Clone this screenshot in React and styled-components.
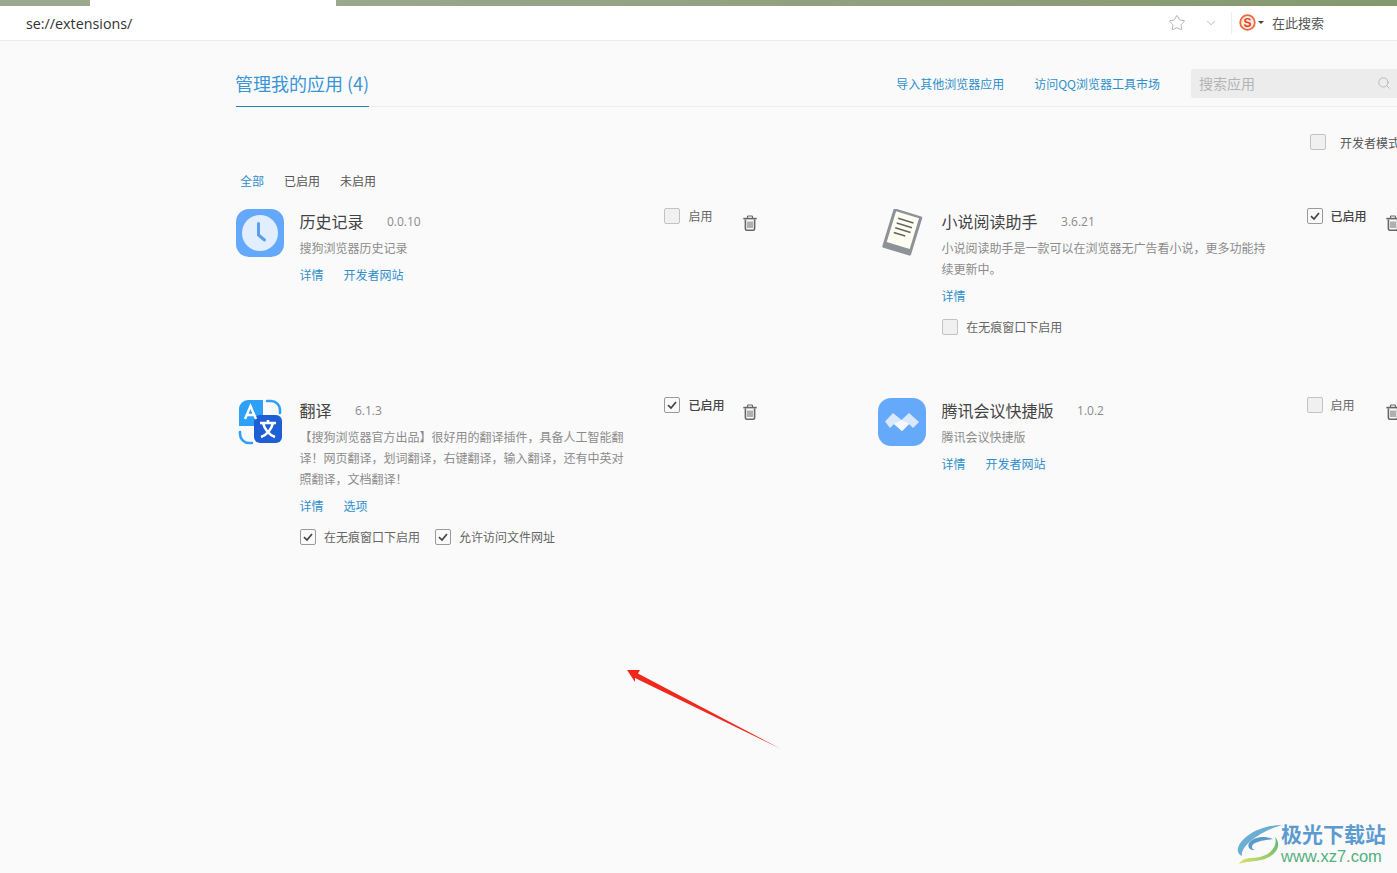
import React from 'react'
import styled, { createGlobalStyle } from 'styled-components'
import { Star, ChevronDown, Search } from 'lucide-react'

const GlobalStyle = createGlobalStyle`
  html, body {
    margin: 0;
    padding: 0;
    background: #fafafa;
  }
  * {
    box-sizing: border-box;
  }
`

const Page = styled.div`
  position: relative;
  width: 1397px;
  height: 873px;
  overflow: hidden;
  background: #fafafa;
  font-family: "Noto Sans CJK SC", "Noto Sans", sans-serif;
  color: #555;
`

const TopStrip = styled.div`
  display: flex;
  height: 6px;
`
const StripPart = styled.div`
  width: ${p => p.$width || 'auto'};
  flex: ${p => (p.$width ? 'none' : '1')};
  background: ${p => p.$bg};
`

const AddressBar = styled.div`
  display: flex;
  align-items: center;
  height: 35px;
  padding: 0 0 1px 26px;
  background: #fff;
  border-bottom: 1px solid #ececec;
`
const Url = styled.div`
  flex: 1;
  padding-top: 2px;
  font-family: "Open Sans", sans-serif;
  font-size: 14.3px;
  color: #333;
`
const BarIcon = styled.span`
  display: flex;
  margin-right: ${p => p.$gap}px;
  color: ${p => p.$color};
`
const BarDivider = styled.span`
  width: 1px;
  height: 22px;
  margin-right: 7px;
  background: #eee;
`
const Caret = styled.span`
  width: 0;
  height: 0;
  margin: 0 8px 0 2px;
  border: 3px solid transparent;
  border-top: 3px solid #444;
  border-bottom: 0;
`
const BarSearch = styled.div`
  width: 125px;
  font-size: 13px;
  color: #555;
`

const Content = styled.div`
  width: 1170px;
  margin-left: 236px;
`

const Header = styled.div`
  display: flex;
  align-items: flex-end;
  height: 66px;
  border-bottom: 1px solid #eee;
`
const Tab = styled.div`
  width: 133px;
  height: 34px;
  margin-bottom: -1px;
  border-bottom: 1px solid #2a82b8;
  font-size: 18px;
  line-height: 21px;
  text-indent: -1px;
  color: #3a95d8;
  white-space: nowrap;
`
const HeaderLinks = styled.div`
  flex: 1;
  display: flex;
  justify-content: flex-end;
  gap: 30px;
  align-self: center;
  margin: 20px 31px 0 0;
`
const HeaderLink = styled.a`
  font-size: 12px;
  color: #2f8fcc;
`
const SearchBox = styled.div`
  display: flex;
  align-items: center;
  justify-content: space-between;
  width: 215px;
  height: 29px;
  margin-bottom: 8px;
  padding: 0 15px 2px 8px;
  border-radius: 2px;
  background: #ececec;
  font-size: 14px;
  color: #b4b4b4;
`

const DevRow = styled.div`
  display: flex;
  justify-content: flex-end;
  align-items: center;
  gap: 14px;
  margin-top: 27px;
  padding-right: 6px;
  height: 16px;
  font-size: 12px;
  color: #555;
`

const Filters = styled.div`
  display: flex;
  gap: 20px;
  margin-top: 22px;
  padding-left: 4px;
  height: 18px;
  font-size: 12px;
  line-height: 18px;
  color: #555;
`
const Filter = styled.span`
  color: ${p => (p.$active ? '#2f8fcc' : '#555')};
`

const Grid = styled.div`
  display: grid;
  grid-template-columns: 642.2px 642px;
  grid-auto-rows: 189px;
  margin-top: 19px;
`
const Card = styled.div`
  display: flex;
  align-items: flex-start;
`
const IconBox = styled.div`
  flex: none;
  width: 48px;
  height: 48px;
`
const Body = styled.div`
  width: 332px;
  margin-left: 15.4px;
  padding-right: 6px;
`
const TitleRow = styled.div`
  display: flex;
  align-items: center;
  gap: 23.5px;
  height: 24px;
`
const Title = styled.div`
  font-size: 16px;
  color: #444;
`
const Version = styled.span`
  font-family: "Open Sans", sans-serif;
  font-size: 12px;
  color: #8a8a8a;
`
const Desc = styled.div`
  margin-top: 4px;
  font-size: 12px;
  line-height: 21px;
  color: #8c8c8c;
`
const Links = styled.div`
  display: flex;
  gap: 20px;
  margin-top: 6px;
  height: 21px;
  font-size: 12px;
  line-height: 21px;
`
const LinkText = styled.a`
  color: #2f8fcc;
`
const Options = styled.div`
  display: flex;
  gap: 15px;
  margin: 13px 0 0 0.6px;
`
const Controls = styled.div`
  flex: none;
  display: flex;
  align-items: flex-start;
  width: 102px;
  margin-top: -1px;
  margin-left: 33px;
`
const EnableLabel = styled.span`
  width: 55px;
  font-size: 12px;
  line-height: 16px;
  color: ${p => (p.$on ? '#444' : '#666')};
  font-weight: ${p => (p.$on ? 500 : 400)};
`
const CheckRow = styled.label`
  display: flex;
  align-items: center;
  gap: 8px;
  font-size: 12px;
  line-height: 16px;
  color: #666;
`
const Box = styled.span`
  flex: none;
  display: flex;
  align-items: center;
  justify-content: center;
  width: 16px;
  height: 16px;
  border: 1px solid ${p => (p.$checked ? '#9a9a9a' : '#c2c2c2')};
  border-radius: 2px;
  background: ${p => (p.$checked ? '#fafafa' : '#f0f0f0')};
`
const TrashWrap = styled.span`
  display: flex;
  margin-top: 7px;
`
const EnableCheck = styled(Box)`
  margin-right: 8px;
`

const Arrow = styled.svg`
  position: absolute;
  left: 620px;
  top: 660px;
`
const Watermark = styled.div`
  position: absolute;
  left: 1237px;
  top: 821px;
  display: flex;
  align-items: center;
`
const WatermarkText = styled.div`
  margin-left: -2px;
`
const WatermarkTitle = styled.div`
  font-size: 21px;
  line-height: 25px;
  font-weight: 700;
  color: #5c9bd1;
`
const WatermarkUrl = styled.div`
  font-family: "Liberation Sans", sans-serif;
  font-size: 16.5px;
  line-height: 20px;
  color: #53b07f;
`

const Check = () => (
  <svg width="12" height="12" viewBox="0 0 12 12">
    <path d="M2 6.200 5 9l5-6" fill="none" stroke="#444" strokeWidth="1.700" />
  </svg>
)

const Trash = () => (
  <svg width="14" height="16" viewBox="0 0 14 16">
    <path d="M4.500 3V1.800Q4.500 1 5.300 1h3.400q.8 0 .8.800V3" fill="none" stroke="#666" strokeWidth="1.200" />
    <path d="M.3 3.600h13.400" stroke="#666" strokeWidth="1.600" />
    <path d="M2.400 4.500v9.300q0 1.400 1.400 1.400h6.400q1.400 0 1.400-1.400V4.500" fill="none" stroke="#666" strokeWidth="1.600" />
    <path d="M5 6.500V13M7 6.500V13M9 6.500V13" stroke="#666" strokeWidth="1" />
  </svg>
)

const ClockIcon = () => (
  <svg width="48" height="48" viewBox="0 0 48 48">
    <rect width="48" height="48" rx="13" fill="#64a8fb" />
    <circle cx="24" cy="24" r="18" fill="#e0eefe" />
    <path d="M22.500 14.500v11.500l6 5" fill="none" stroke="#5a9fef" strokeWidth="3" strokeLinecap="round" />
  </svg>
)

const BookIcon = () => (
  <svg width="48" height="48" viewBox="0 0 48 48">
    <g transform="rotate(17 24 24)">
      <rect x="9" y="2.500" width="30" height="41" rx="1.500" fill="#8d9296" />
      <rect x="12" y="5" width="24" height="32" fill="#fdfdf2" />
      <path d="M16 11h16M16 16h16M16 21h16M16 26h12" stroke="#66665f" strokeWidth="1.600" />
    </g>
  </svg>
)

const TranslateIcon = () => (
  <svg width="48" height="48" viewBox="0 0 48 48">
    <path d="M3 11a9 9 0 0 1 9-9h15v22a4 4 0 0 1-4 4H3z" fill="#2ea0f8" />
    <path d="M31 3h4a9 9 0 0 1 9 9v3" fill="none" stroke="#2ea0f8" strokeWidth="2.600" strokeLinecap="round" />
    <path d="M4 34v2a9 9 0 0 0 9 9h3" fill="none" stroke="#2ea0f8" strokeWidth="2.600" strokeLinecap="round" />
    <rect x="18" y="17" width="28" height="28" rx="6" fill="#1f5fd6" />
    <path d="M9 21l5.500-13L20 21M11 17h7" fill="none" stroke="#fff" strokeWidth="2.400" />
    <path d="M24 25h16M32 22v3M37 25c-1.500 6-6 12-12 14M27 25c1.500 6 6 12 12 14" fill="none" stroke="#fff" strokeWidth="2.600" />
  </svg>
)

const MeetingIcon = () => (
  <svg width="48" height="48" viewBox="0 0 48 48">
    <rect width="48" height="48" rx="13" fill="#65a9fb" />
    <path d="M7 23.500 15 15l8.500 7L31 15l10 9-6 6-4-4-7 7-8-7-4 4z" fill="#d9e8fd" />
    <path d="M16 26l7.500-4 7.500 4-7 7z" fill="#f6f9ff" />
  </svg>
)

const SogouLogo = () => (
  <svg width="17" height="18" viewBox="0 0 17 18">
    <circle cx="8.500" cy="8.500" r="7.300" fill="#fbe9e2" stroke="#ea6a3c" strokeWidth="1.800" />
    <text x="8.500" y="12.500" textAnchor="middle" fontSize="12" fontWeight="700" fontFamily="Liberation Sans" fill="#e2401c">S</text>
  </svg>
)

const SwirlLogo = () => (
  <svg width="46" height="42" viewBox="0 0 46 42">
    <defs>
      <linearGradient id="swirlGreen" x1="1" y1="0" x2="0" y2="1">
        <stop offset="0" stopColor="#58b56f" />
        <stop offset="1" stopColor="#dfe26a" />
      </linearGradient>
    </defs>
    <path d="M45 2C27 2 6 11 1 25c-1 4 1 7 4 8C3 23 23 8 45 2z" fill="#6aaed6" />
    <path d="M36 16c-9-4-20-2-24 4-2 4 1 8 6 7-4-1-4-5 0-7 6-3 13-3 18-4z" fill="#5a9bc9" />
    <path d="M38 14c3 9-4 20-23 21-6 0-11 2-13 6 8-3 15-2 22-4 14-3 22-14 14-23z" fill="url(#swirlGreen)" />
  </svg>
)

const apps = [
  {
    name: '历史记录',
    version: '0.0.10',
    icon: <ClockIcon />,
    desc: '搜狗浏览器历史记录',
    links: ['详情', '开发者网站'],
    enabled: false,
    options: [],
  },
  {
    name: '小说阅读助手',
    version: '3.6.21',
    icon: <BookIcon />,
    desc: '小说阅读助手是一款可以在浏览器无广告看小说，更多功能持续更新中。',
    links: ['详情'],
    enabled: true,
    options: [{ label: '在无痕窗口下启用', checked: false }],
  },
  {
    name: '翻译',
    version: '6.1.3',
    icon: <TranslateIcon />,
    desc: '【搜狗浏览器官方出品】很好用的翻译插件，具备人工智能翻译！网页翻译，划词翻译，右键翻译，输入翻译，还有中英对照翻译，文档翻译！',
    links: ['详情', '选项'],
    enabled: true,
    options: [
      { label: '在无痕窗口下启用', checked: true },
      { label: '允许访问文件网址', checked: true },
    ],
  },
  {
    name: '腾讯会议快捷版',
    version: '1.0.2',
    icon: <MeetingIcon />,
    desc: '腾讯会议快捷版',
    links: ['详情', '开发者网站'],
    enabled: false,
    options: [],
  },
]

const App = () => {
  return (
    <Page>
      <GlobalStyle />
      <TopStrip>
        <StripPart $width="90px" $bg="#9aa88d" />
        <StripPart $width="246px" $bg="#fff" />
        <StripPart $bg="linear-gradient(90deg, #9aa88d, #84996f)" />
      </TopStrip>
      <AddressBar>
        <Url>se://extensions/</Url>
        <BarIcon $gap={18} $color="#aaa"><Star size={18} strokeWidth={1.2} /></BarIcon>
        <BarIcon $gap={13} $color="#999"><ChevronDown size={14} strokeWidth={1.2} /></BarIcon>
        <BarDivider />
        <SogouLogo />
        <Caret />
        <BarSearch>在此搜索</BarSearch>
      </AddressBar>
      <Content>
        <Header>
          <Tab>管理我的应用 (4)</Tab>
          <HeaderLinks>
            <HeaderLink>导入其他浏览器应用</HeaderLink>
            <HeaderLink>访问QQ浏览器工具市场</HeaderLink>
          </HeaderLinks>
          <SearchBox>
            搜索应用
            <Search size={14} strokeWidth={1} color="#999" />
          </SearchBox>
        </Header>
        <DevRow>
          <Box />
          <span>开发者模式</span>
        </DevRow>
        <Filters>
          <Filter $active>全部</Filter>
          <Filter>已启用</Filter>
          <Filter>未启用</Filter>
        </Filters>
        <Grid>
          {apps.map(app => (
            <Card key={app.name}>
              <IconBox>{app.icon}</IconBox>
              <Body>
                <TitleRow>
                  <Title>{app.name}</Title>
                  <Version>{app.version}</Version>
                </TitleRow>
                <Desc>{app.desc}</Desc>
                <Links>
                  {app.links.map(link => <LinkText key={link}>{link}</LinkText>)}
                </Links>
                {app.options.length > 0 && (
                  <Options>
                    {app.options.map(option => (
                      <CheckRow key={option.label}>
                        <Box $checked={option.checked}>{option.checked && <Check />}</Box>
                        {option.label}
                      </CheckRow>
                    ))}
                  </Options>
                )}
              </Body>
              <Controls>
                <EnableCheck $checked={app.enabled}>{app.enabled && <Check />}</EnableCheck>
                <EnableLabel $on={app.enabled}>{app.enabled ? '已启用' : '启用'}</EnableLabel>
                <TrashWrap><Trash /></TrashWrap>
              </Controls>
            </Card>
          ))}
        </Grid>
      </Content>
      <Arrow width="170" height="95" viewBox="0 0 170 95">
        <path d="M7 10 20 10 18 13.500 161 89 15 18 15 22z" fill="#f0291c" />
      </Arrow>
      <Watermark>
        <SwirlLogo />
        <WatermarkText>
          <WatermarkTitle>极光下载站</WatermarkTitle>
          <WatermarkUrl>www.xz7.com</WatermarkUrl>
        </WatermarkText>
      </Watermark>
    </Page>
  )
}

export default App
